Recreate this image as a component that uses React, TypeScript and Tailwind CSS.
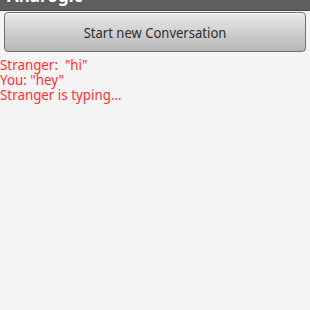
import React from "react";

export default function App() {
  return (
    <div className="w-[310px] h-[310px] bg-[#f4f4f4] overflow-hidden" style={{ fontFamily: '"Noto Sans", "Open Sans", sans-serif' }}>
      <div className="h-[11px] bg-[#5e5e5e] overflow-hidden flex items-end border-b border-[#4a4a4a]">
        <span className="pl-[7px] text-white font-bold text-[17px] leading-none mb-[6px]">Anarogic</span>
      </div>
      <div className="px-[4px] pt-[1px]">
        <button className="w-full h-[40px] rounded-[4px] border border-[#6f6f6f] bg-gradient-to-b from-[#e9e9e9] via-[#d0d0d0] to-[#b7b7b7] shadow-[inset_0_1px_0_#fafafa] text-[#2e2e2e] text-[15px] flex items-center justify-center">
          <span className="inline-block scale-x-[0.87]">Start new Conversation</span>
        </button>
      </div>
      <div className="pt-[5px] text-[#ff3030] text-[15px] leading-[15px]">
        <div className="origin-left scale-x-[0.89]">Stranger:&nbsp; "hi"</div>
        <div className="origin-left scale-x-[0.89]">You: "hey"</div>
        <div className="origin-left scale-x-[0.89]">Stranger is typing...</div>
      </div>
    </div>
  );
}
